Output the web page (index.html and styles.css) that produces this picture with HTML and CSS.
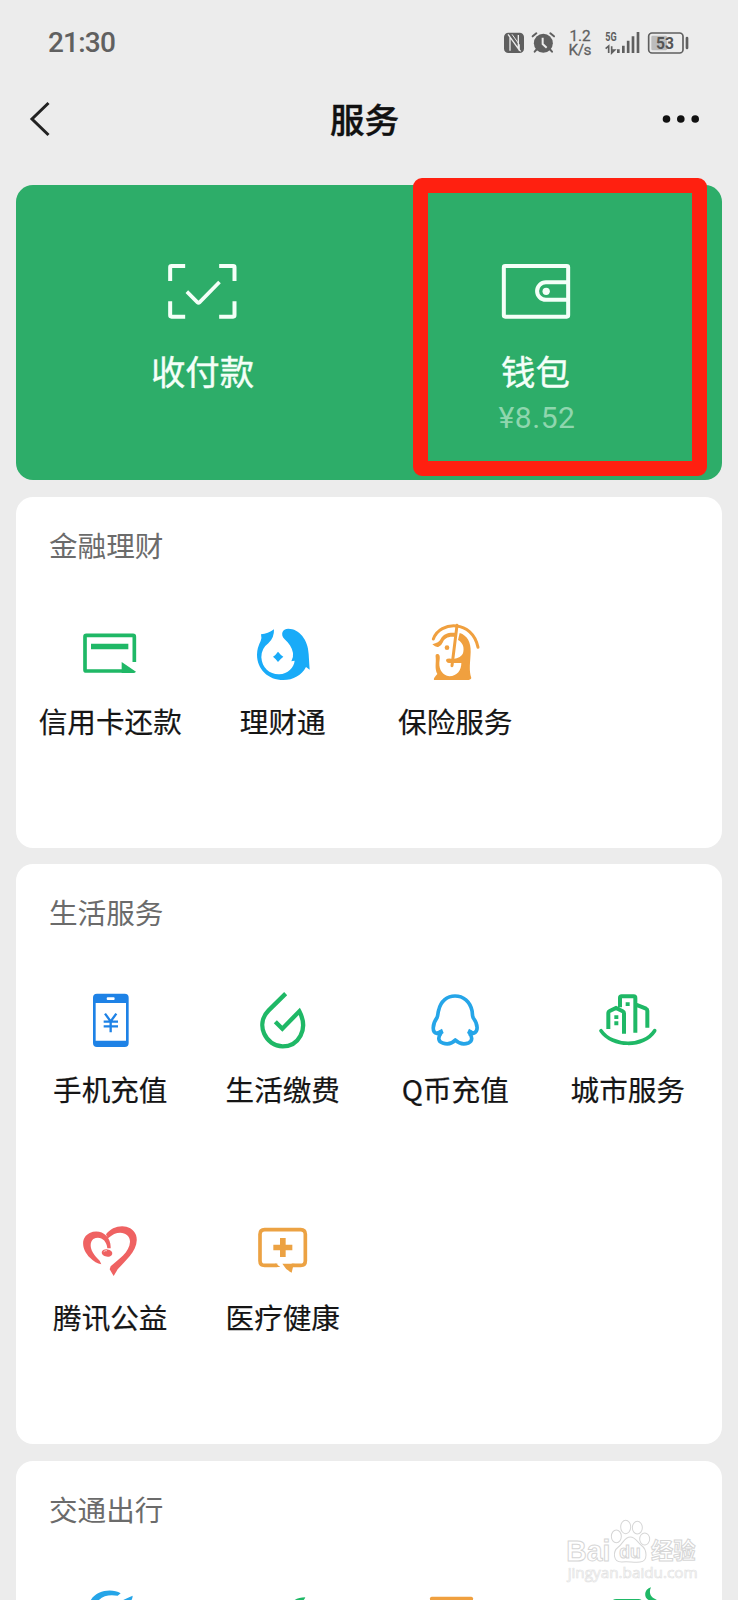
FILE: index.html
```html
<!DOCTYPE html>
<html lang="zh-CN">
<head>
<meta charset="utf-8">
<title>服务</title>
<link rel="stylesheet" href="styles.css">
</head>
<body>
<div class="screen">
  <header class="status-bar">
    <span class="clock">21:30</span>
    <svg class="status-icons" viewBox="60 45 585 99">
      <rect x="72" y="65" width="60" height="61" rx="13" fill="#5f5f5f"/>
      <path d="M90 119V78L115 113V72M90 78L84 70M115 113L122 121" fill="none" stroke="#ececec" stroke-width="4"/>
      <path d="M96 70L118 101V120" fill="none" stroke="#ececec" stroke-width="3"/>
      <circle cx="190" cy="97" r="28.500" fill="#5f5f5f"/>
      <path d="M158 76L169 67M222 76L211 67M171 114L164 122M209 114L216 122" stroke="#5f5f5f" stroke-width="6" stroke-linecap="round"/>
      <path d="M188 80V99L200 110" fill="none" stroke="#ececec" stroke-width="6"/>
      <text class="net" x="300" y="90" text-anchor="middle" textLength="63">1.2</text>
      <text class="net" x="300" y="133" text-anchor="middle" textLength="69">K/s</text>
      <text class="gen" x="376" y="90" textLength="34" lengthAdjust="spacingAndGlyphs">5G</text>
      <path d="M377 113L386 105V126M395 106V126L404 117H396" fill="none" stroke="#5f5f5f" stroke-width="5"/>
      <path d="M415 126V115M430 126V104M444.500 126V89M459 126V76M474 126V63" stroke="#5f5f5f" stroke-width="8"/>
      <rect x="506" y="66" width="103" height="60" rx="10" fill="none" stroke="#5f5f5f" stroke-width="5"/>
      <rect x="514" y="74" width="47" height="44" rx="4" fill="#bcbcbc"/>
      <text class="charge" x="555" y="113" text-anchor="middle" textLength="54" lengthAdjust="spacingAndGlyphs">53</text>
      <path d="M621 81V111" stroke="#5f5f5f" stroke-width="8" stroke-linecap="round"/>
    </svg>
  </header>

  <nav class="nav-bar">
    <svg class="back" viewBox="0 0 24 38"><path d="M20.500 3L4 19L20.500 35" fill="none" stroke="#222" stroke-width="3"/></svg>
    <h1 class="nav-title">服务</h1>
    <svg class="more" viewBox="0 0 38 10"><g fill="#111"><circle cx="4.500" cy="5" r="3.800"/><circle cx="18.800" cy="5" r="3.800"/><circle cx="33.200" cy="5" r="3.800"/></g></svg>
  </nav>

  <main class="cards">
    <section class="pay-card">
      <div class="pay-item">
        <svg class="pay-icon" viewBox="500.500 276 216 180" fill="none" stroke="#f4fff8" stroke-width="12">
          <path d="M555 288H514Q510 288 510 292V333M657 288H699Q703 288 703 292V333M510 394V436Q510 440 514 440H555M703 394V436Q703 440 699 440H657"/>
          <path d="M560 365L592 397Q595 400 598 397L658 336" stroke-width="11"/>
        </svg>
        <span class="pay-label">收付款</span>
      </div>
      <div class="pay-item">
        <svg class="pay-icon" viewBox="299.500 276 216 180" fill="none" stroke="#f4fff8" stroke-width="12">
          <rect x="311" y="288" width="193" height="152" rx="4"/>
          <path d="M504 337H437A26 26 0 0 0 437 389.500H504"/>
          <circle cx="438" cy="364" r="11" fill="#f4fff8" stroke="none"/>
        </svg>
        <span class="pay-label">钱包</span>
        <span class="balance">¥8.52</span>
      </div>
      <div class="highlight"></div>
    </section>

    <section class="card card-finance">
      <h2 class="card-title">金融理财</h2>
      <div class="grid">
        <div class="item">
          <svg class="icon" viewBox="180 369 180 180">
            <path d="M343 486V410Q343 406 339 406H199Q195 406 195 410V509Q195 513 199 513H325" fill="none" stroke="#1fb866" stroke-width="11"/>
            <path d="M213 431H325V448H213ZM305 486L348 515Q345 519 340 519H305Z" fill="#1fb866"/>
          </svg>
          <span class="label">信用卡还款</span>
        </div>
        <div class="item">
          <svg class="icon" viewBox="699 369 180 180">
            <path fill="#19abf8" d="M723 403Q744 401 762 388Q763 414 745 430Q724 445 724 472C726 505 750 524 778 523C803 521 822 503 824 482L814 484Q821 470 819 459C816 443 807 430 794 418C780 403 787 386 805 386C837 386 865 419 866 463Q867 480 869 509L858 501C845 526 820 540 790 540C744 540 711 507 711 464Q711 444 722 423Q726 414 723 403Z"/>
            <path fill="#19abf8" d="M774 455Q781 464 790 470Q781 477 774 486Q768 477 759 470Q768 464 774 455Z"/>
          </svg>
          <span class="label">理财通</span>
        </div>
        <div class="item">
          <svg class="icon" viewBox="165 99 180 180">
            <path d="M190 147C210 92 308 89 324 172" fill="none" stroke="#f0a03f" stroke-width="9" stroke-linecap="round"/>
            <path d="M261 106L246 227" stroke="#f0a03f" stroke-width="9" stroke-linecap="round"/>
            <path fill="#f0a03f" fill-rule="evenodd" d="M187 163Q207 158 212 147C220 131 239 126 257 129L254 141C236 138 224 145 219 156Q215 166 206 170Q198 173 187 163ZM269 129C292 136 303 158 302 186C301 218 296 239 304 264Q302 270 291 270H192Q189 266 202 252C193 236 199 219 197 202Q195 190 204 192C212 195 209 207 208 219C207 239 218 256 238 259C262 258 274 240 274 219H237Q228 217 228 209Q233 203 249 207Q274 204 279 190C284 173 279 158 264 150Z"/>
            <circle cx="231" cy="173" r="7" fill="#f0a03f"/>
          </svg>
          <span class="label">保险服务</span>
        </div>
      </div>
    </section>

    <section class="card card-life">
      <h2 class="card-title">生活服务</h2>
      <div class="grid">
        <div class="item">
          <svg class="icon" viewBox="150 60 180 180">
            <path fill="#1e82e6" fill-rule="evenodd" d="M201 71H284Q296 71 296 83V219Q296 231 284 231H201Q189 231 189 219V83Q189 71 201 71ZM197 99V212H288V99ZM233 82Q230 82 230 86T233 90H251Q254 90 254 86T251 82Z"/>
            <path d="M225 131L242 154L259 131M221 155H264M221 169H264M242 154V187" fill="none" stroke="#1e82e6" stroke-width="7"/>
          </svg>
          <span class="label">手机充值</span>
        </div>
        <div class="item">
          <svg class="icon" viewBox="669 60 180 180">
            <path d="M767 71L716 121C674 163 708 229 758 229C805 229 837 179 808 124L757 176L736 155" fill="none" stroke="#1fb866" stroke-width="13"/>
          </svg>
          <span class="label">生活缴费</span>
        </div>
        <div class="item">
          <svg class="icon" viewBox="165 60 180 180">
            <path d="M216 184L201 190C186 188 186 164 201 143C204 136 203 131 206 121C212 93 232 78 255 78C280 78 300 94 306 122C308 132 306 137 310 144C325 164 325 186 311 190L296 184M213 190C204 200 203 215 218 219C235 225 247 220 256 210C267 221 279 225 295 219C309 213 307 199 298 190" fill="none" stroke="#25a5e8" stroke-width="11" stroke-linejoin="round"/>
            <path fill="#25a5e8" d="M200 185L216 176L221 189L208 199ZM312 185L297 176L291 189L304 199Z"/>
          </svg>
          <span class="label">Q币充值</span>
        </div>
        <div class="item">
          <svg class="icon" viewBox="683 60 180 180">
            <g fill="none" stroke="#1fb866" stroke-width="12">
              <path d="M714 177V128Q714 125 718 123L737 114L757 124Q761 126 761 130V191M749 112V84Q749 79 754 79H790Q795 79 795 84V188M795 103L827 116Q831 118 831 122V173"/>
              <path d="M692 182C725 231 820 234 853 182" stroke-linecap="round" stroke-width="11"/>
            </g>
            <path fill="#1fb866" d="M732 136H744V147H732ZM732 154H744V166H732ZM766 97H778V108H766Z"/>
          </svg>
          <span class="label">城市服务</span>
        </div>
        <div class="item">
          <svg class="icon" viewBox="150 54 180 180">
            <path fill="#ef6262" d="M228 103C250 73 302 68 318 105C331 147 285 182 263 208L251 228L239 208L242 199C265 178 299 157 300 125C300 97 263 86 234 115ZM242 145H232C230 119 209 106 190 117C175 131 181 157 209 182L214 193Q196 190 181 174C154 148 151 113 179 99C210 85 244 106 242 145Z"/>
            <ellipse cx="231" cy="159" rx="16" ry="11" fill="#ef6262" transform="rotate(10 231 159)"/>
            <path d="M221 155Q225 151 231 152" fill="none" stroke="#fff" stroke-width="2"/>
          </svg>
          <span class="label">腾讯公益</span>
        </div>
        <div class="item">
          <svg class="icon" viewBox="669 54 180 180">
            <path d="M742 196H704Q690 196 690 182V103Q690 89 704 89H812Q826 89 826 103V182Q826 196 812 196H785" fill="none" stroke="#eca243" stroke-width="11"/>
            <path fill="#eca243" d="M736 190L751 201H738ZM757 191H793V201H789L785 218Q767 209 757 191ZM750 114H767V134H787V151H767V171H750V151H730V134H750Z"/>
          </svg>
          <span class="label">医疗健康</span>
        </div>
      </div>
    </section>

    <section class="card card-travel">
      <h2 class="card-title">交通出行</h2>
      <div class="grid">
        <div class="item">
          <svg class="icon" viewBox="240 498 180 180">
            <path fill="#25a5e8" d="M270 542C287 506 337 502 362 517L353 524C328 520 308 523 292 542ZM360 542Q379 532 398 524Q398 534 391 542Z"/>
          </svg>
        </div>
        <div class="item">
          <svg class="icon" viewBox="759 498 180 180">
            <path fill="#1fb866" d="M842 542Q854 534 868 542ZM878 542Q891 529 916 529Q913 538 903 542Z"/>
          </svg>
        </div>
        <div class="item">
          <svg class="icon" viewBox="168 498 180 180">
            <path fill="#f0a03f" d="M183 550V532Q183 527 188 527H307Q312 527 312 532V550Z"/>
          </svg>
        </div>
        <div class="item">
          <svg class="icon" viewBox="687 498 180 180">
            <path fill="#1fb866" d="M726 545Q730 534 742 534H808Q819 534 823 545ZM846 499C838 516 845 531 863 536C851 544 832 539 829 524C827 512 835 502 846 499Z"/>
          </svg>
        </div>
      </div>
    </section>
  </main>

  <svg class="watermark" viewBox="585 295 410 200">
    <g fill="#fff" stroke="#d6d6d6" stroke-width="3">
      <text class="wm-brand" x="592" y="424" textLength="132" lengthAdjust="spacingAndGlyphs">Bai</text>
      <ellipse cx="742" cy="350" rx="15" ry="19"/>
      <ellipse cx="770" cy="322" rx="15" ry="20"/>
      <ellipse cx="805" cy="324" rx="15" ry="19"/>
      <ellipse cx="827" cy="358" rx="15" ry="18"/>
      <path d="M784 352C799 352 804 366 816 376C835 390 838 424 813 427C793 429 776 424 758 427C732 427 730 396 748 382C763 371 766 352 784 352Z"/>
      <text class="wm-du" x="751" y="416" textLength="64" lengthAdjust="spacingAndGlyphs">du</text>
      <text class="wm-cn" x="846" y="419" textLength="134" lengthAdjust="spacingAndGlyphs">经验</text>
      <text class="wm-url" x="596" y="474" textLength="390" lengthAdjust="spacingAndGlyphs">jingyan.baidu.com</text>
    </g>
  </svg>
</div>
</body>
</html>
```
FILE: styles.css
```css
* {
  box-sizing: border-box;
}

body {
  margin: 0;
  background: #ececec;
  font-family: "Noto Sans CJK SC", sans-serif;
}

.screen {
  position: relative;
  width: 738px;
  height: 1600px;
  overflow: hidden;
}

.status-bar {
  display: flex;
  justify-content: space-between;
  align-items: center;
  height: 84px;
  padding: 0 43px 0 48px;
}

.clock {
  padding-top: 2px;
  color: #606060;
  font: 500 28px/34px Roboto, sans-serif;
  letter-spacing: -0.8px;
}

.status-icons {
  width: 195px;
  height: 33px;
}

.net {
  fill: #606060;
  font: 46px Roboto, sans-serif;
  stroke: #606060;
  stroke-width: 0.8px;
}

.gen {
  fill: #5f5f5f;
  font: 700 36px Roboto, sans-serif;
}

.charge {
  fill: #555;
  font: 700 47px Roboto, sans-serif;
}

.nav-bar {
  display: grid;
  grid-template-columns: 1fr auto 1fr;
  align-items: center;
  height: 70px;
  padding: 0 38px 0 28px;
}

.back {
  width: 24px;
  height: 38px;
}

.more {
  justify-self: end;
  width: 38px;
  height: 10px;
}

.nav-title {
  margin: 0;
  padding: 0 0 2px 1px;
  color: #111;
  font-size: 34.5px;
  font-weight: 500;
  line-height: 48px;
  -webkit-text-stroke: 0.4px #111;
}

.cards {
  display: flex;
  flex-direction: column;
  gap: 16.500px;
  padding: 31px 16px 0;
}

.pay-card {
  position: relative;
  display: grid;
  grid-template-columns: 1fr 1fr;
  height: 295px;
  padding: 77px 20px 0;
  border-radius: 17px;
  background: #2dad69;
}

.pay-item {
  display: flex;
  flex-direction: column;
  align-items: center;
}

.pay-icon {
  width: 72px;
  height: 60px;
}

.pay-label {
  margin-top: 26px;
  color: #f4fff8;
  font-size: 34.4px;
  line-height: 44px;
  -webkit-text-stroke: 0.4px #f4fff8;
}

.balance {
  margin: 8px 0 0 3px;
  color: #8fd6ae;
  font: 30px/36px Roboto, sans-serif;
  letter-spacing: 0.5px;
}

.highlight {
  position: absolute;
  left: 397px;
  top: -7px;
  width: 294px;
  height: 298px;
  border: 15.500px solid #ff2010;
  border-radius: 9px;
}

.card {
  padding: 28px 8px 0;
  border-radius: 17px;
  background: #fff;
}

.card-finance {
  height: 351px;
}

.card-life {
  height: 580px;
}

.card-travel {
  height: 220px;
}

.card-title {
  margin: 0 0 58px 25px;
  color: #6b6b6b;
  font-size: 28.6px;
  font-weight: 400;
  line-height: 40px;
}

.grid {
  display: grid;
  grid-template-columns: repeat(4, 1fr);
  grid-auto-rows: 228px;
}

.item {
  display: flex;
  flex-direction: column;
  align-items: center;
}

.icon {
  flex: none;
  width: 60px;
  height: 60px;
}

.label {
  margin-top: 18px;
  color: #151515;
  font-size: 28.6px;
  line-height: 40px;
  white-space: nowrap;
  -webkit-text-stroke: 0.2px #151515;
}

.card-life .label {
  margin-top: 19px;
}

.watermark {
  position: absolute;
  left: 564px;
  top: 1518px;
  width: 136.700px;
  height: 66.700px;
}

.wm-brand {
  font: 700 88px "Liberation Sans", sans-serif;
}

.wm-du {
  font: 700 54px "Liberation Sans", sans-serif;
}

.wm-cn {
  font: 700 67px "Noto Sans CJK SC", sans-serif;
}

.wm-url {
  font: 44px "Open Sans", sans-serif;
  stroke: #e2e2e2;
  stroke-width: 2px;
}
```
